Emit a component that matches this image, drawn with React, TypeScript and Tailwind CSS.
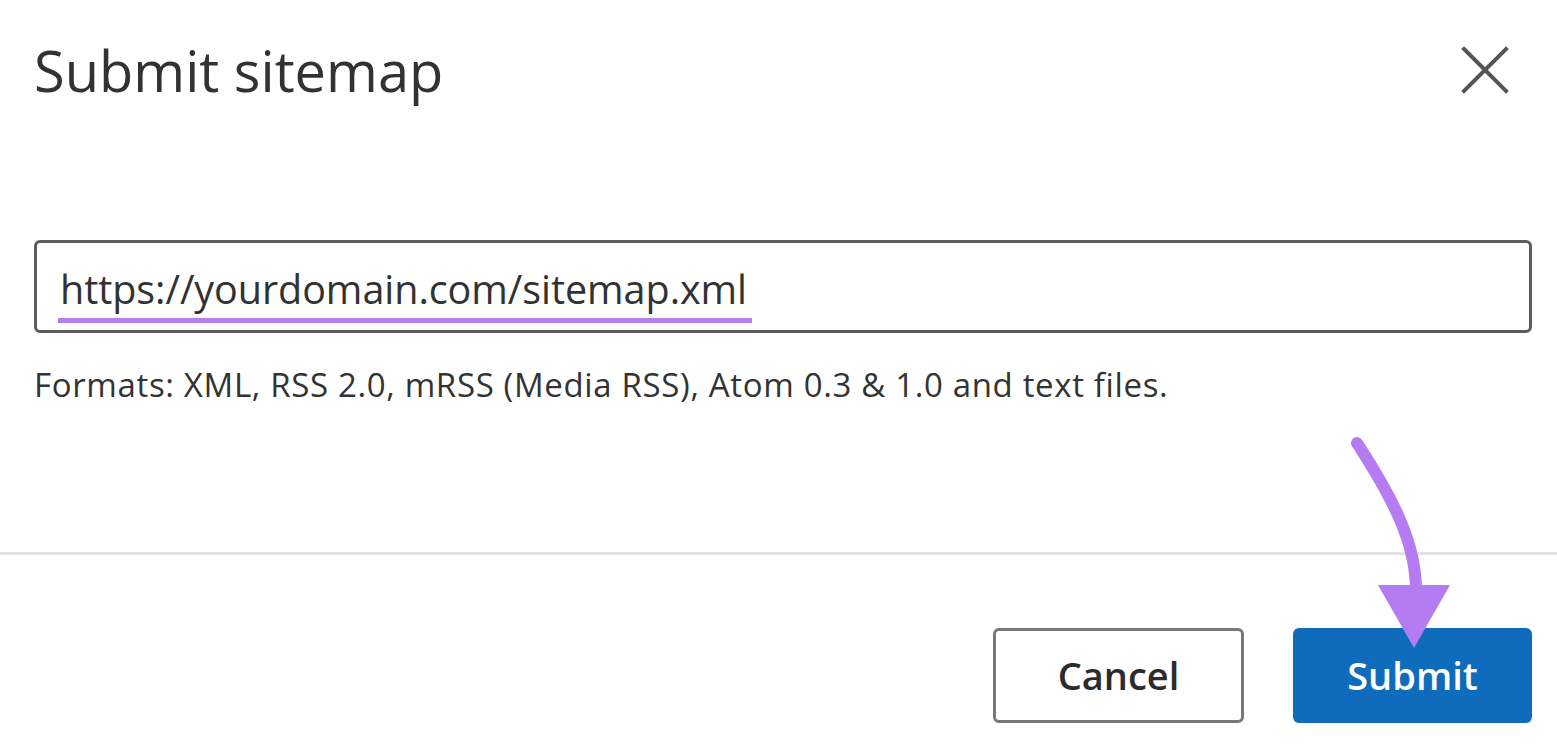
export default function App() {
  const font = { fontFamily: '"Open Sans", "Noto Sans", sans-serif' };
  return (
    <div className="relative w-full h-[753px] bg-white overflow-hidden text-[#323232]" style={font}>
      {/* Header */}
      <div className="flex items-start justify-between pl-[34px] pr-[48px] pt-[30px]">
        <h1 className="text-[56px] leading-[80px] font-normal text-[#323232]">Submit sitemap</h1>
        <button className="mt-[16px] w-[48px] h-[48px] flex items-center justify-center text-[#555]" aria-label="Close">
          <svg width="48" height="48" viewBox="0 0 48 48" fill="none" stroke="currentColor" strokeWidth="4" strokeLinecap="square">
            <line x1="3" y1="3" x2="45" y2="45" />
            <line x1="45" y1="3" x2="3" y2="45" />
          </svg>
        </button>
      </div>

      {/* Body */}
      <div className="pl-[34px] pr-[25px] mt-[130px]">
        <div className="h-[93px] border-[3px] border-[#5c5c5c] rounded-[6px] flex items-center pl-[23px]">
          <span className="relative text-[39.5px] leading-[50px] tracking-[-0.05px] text-[#323232] mt-[4px]">
            https://yourdomain.com/sitemap.xml
            <span className="absolute left-[-2px] right-[-5px] bottom-[-9px] h-[5px] bg-[#b47fe8]" />
          </span>
        </div>
        <p className="mt-[32px] text-[33px] leading-[40px] tracking-[0.65px] text-[#333]">
          Formats: XML, RSS 2.0, mRSS (Media RSS), Atom 0.3 &amp; 1.0 and text files.
        </p>
      </div>

      {/* Divider */}
      <div className="mt-[147px] border-t-[3px] border-[#e2e2e2]" />

      {/* Footer */}
      <div className="flex justify-end gap-[49px] pr-[25px] mt-[73px]">
        <button className="w-[251px] h-[95px] border-[3px] border-[#777] rounded-[6px] bg-white text-[38px] font-semibold text-[#2b2b2b]">
          Cancel
        </button>
        <button className="w-[239px] h-[95px] rounded-[6px] bg-[#0f6cbd] text-[38px] font-semibold text-white">
          Submit
        </button>
      </div>

      {/* Annotation arrow */}
      <svg className="absolute left-0 top-0 pointer-events-none" width="1557" height="753" viewBox="0 0 1557 753" fill="none">
        <path d="M1357 443 C 1394 500, 1417 545, 1416 594" stroke="#b57cf2" strokeWidth="12" strokeLinecap="round" />
        <polygon points="1378,585 1450,585 1414,648" fill="#b57cf2" />
      </svg>
    </div>
  );
}
